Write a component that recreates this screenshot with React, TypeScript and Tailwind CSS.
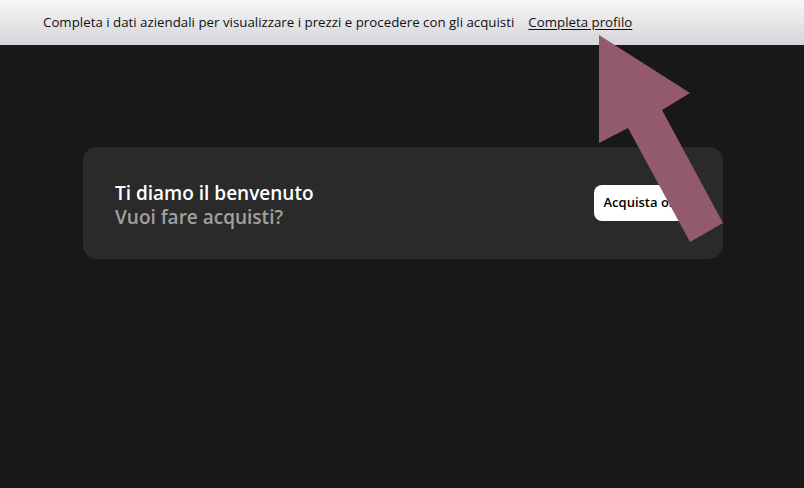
import React from 'react';

// Big arrow pointing at the "Completa profilo" link
const PointerArrow = () => (
  <svg className="pointer-events-none absolute left-0 top-0" width="804" height="488" viewBox="0 0 804 488">
    <polygon points="599,35 690,93 662,110 723,223 690,242 628,128 599,143" fill="#935a6b" />
  </svg>
);

const App = () => {
  return (
    <div className="relative flex h-[488px] w-[804px] flex-col overflow-hidden bg-[#181818] font-['Open_Sans',sans-serif]">
      <div className="flex h-[45px] items-center gap-[14px] bg-gradient-to-b from-[#f7f7f7] to-[#d5d5da] pl-[43px] text-[13.3px] text-[#111]">
        <span>Completa i dati aziendali per visualizzare i prezzi e procedere con gli acquisti</span>
        <a href="#" className="underline underline-offset-2">Completa profilo</a>
      </div>

      <div className="pl-[83px] pr-[81px] pt-[102px]">
        <div className="flex h-[112px] items-center justify-between rounded-[14px] bg-[#2a2a2a] pl-[32px] pr-[32px]">
          <div className="flex flex-col pt-[4px] text-[19px] font-semibold leading-[24px]">
            <span className="text-white">Ti diamo il benvenuto</span>
            <span className="text-[#a0a0a0]">Vuoi fare acquisti?</span>
          </div>
          <button className="h-[36px] rounded-[8px] bg-white px-[9px] text-[13px] font-semibold text-black">
            Acquista ora
          </button>
        </div>
      </div>

      <PointerArrow />
    </div>
  );
};

export default App;
